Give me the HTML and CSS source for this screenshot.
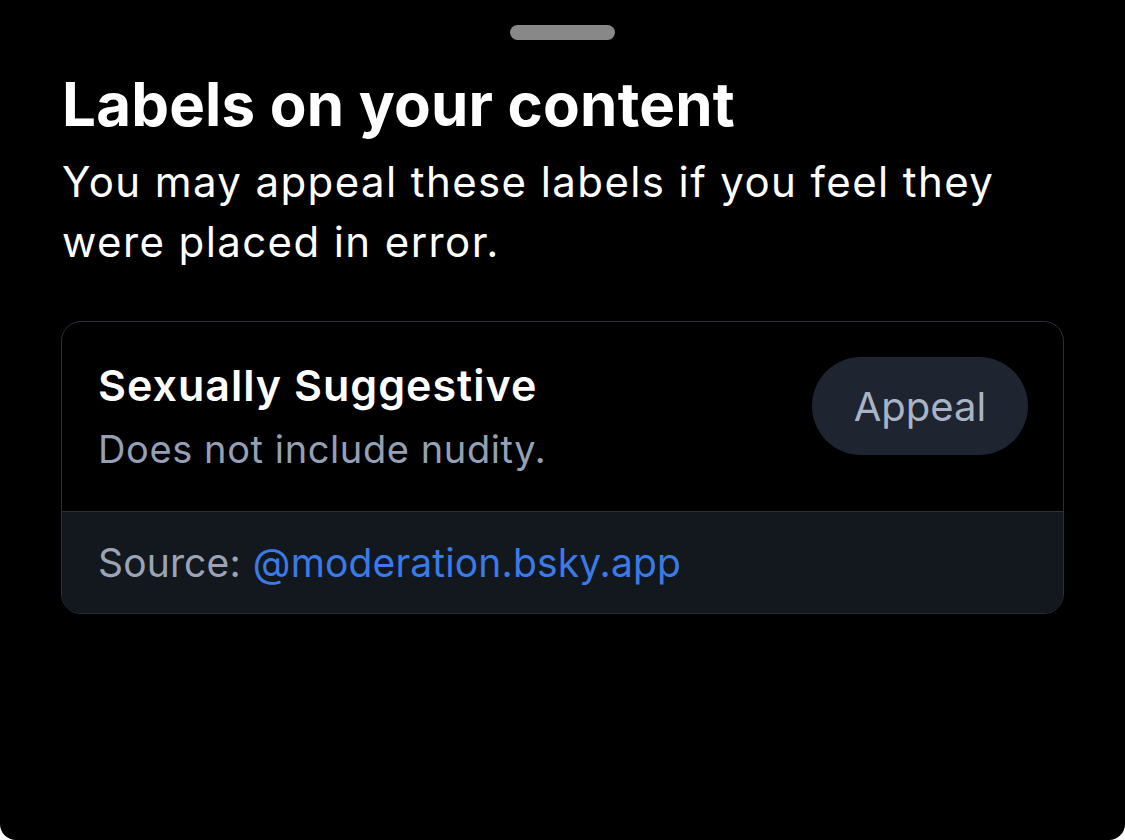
FILE: index.html
```html
<!DOCTYPE html>
<html lang="en">
<head>
<meta charset="utf-8">
<title>Labels on your content</title>
<link rel="stylesheet" href="styles.css">
</head>
<body>
<div class="sheet">
  <div class="handle"></div>
  <h1 class="title">Labels on your content</h1>
  <p class="subtitle">You may appeal these labels if you feel they were placed in error.</p>
  <div class="card">
    <div class="card-main">
      <div class="label-info">
        <div class="label-name">Sexually Suggestive</div>
        <div class="label-desc">Does not include nudity.</div>
      </div>
      <button class="appeal">Appeal</button>
    </div>
    <div class="card-footer">
      <span class="source-label">Source:</span> <span class="source-link">@moderation.bsky.app</span>
    </div>
  </div>
</div>
</body>
</html>
```
FILE: styles.css
```css
html, body {
  margin: 0;
  padding: 0;
  background: #ffffff;
}
body {
  font-family: Inter, "Noto Sans", sans-serif;
  -webkit-font-smoothing: antialiased;
}
.sheet {
  box-sizing: border-box;
  height: 840px;
  background: #000000;
  border-radius: 0 0 16px 16px;
  padding: 25px 61px 0 61px;
  display: flex;
  flex-direction: column;
}
.handle {
  align-self: center;
  width: 105px;
  height: 15px;
  border-radius: 8px;
  background: #888888;
}
.title {
  margin: 29px 0 0 1px;
  font-size: 60px;
  line-height: 70px;
  font-weight: 700;
  color: #ffffff;
  letter-spacing: 0.2px;
}
.subtitle {
  margin: 13px 0 0 1px;
  font-size: 42px;
  line-height: 60px;
  font-weight: 400;
  color: #ffffff;
  letter-spacing: 1.4px;
  max-width: 970px;
}
.card {
  margin-top: 49px;
  border: 1px solid #2a2f3b;
  border-radius: 20px;
  overflow: hidden;
}
.card-main {
  display: flex;
  justify-content: space-between;
  align-items: flex-start;
  padding: 35px 35px 34px 36px;
  border-bottom: 1px solid #2a2f3b;
}
.label-info {
  display: flex;
  flex-direction: column;
  gap: 8px;
}
.label-name {
  font-size: 43px;
  line-height: 56px;
  font-weight: 600;
  letter-spacing: 1px;
  color: #ffffff;
}
.label-desc {
  font-size: 38px;
  line-height: 56px;
  letter-spacing: 0.6px;
  color: #96a0b4;
}
.appeal {
  font-family: inherit;
  border: none;
  background: #1e2430;
  color: #a9b3c6;
  font-size: 40px;
  height: 98px;
  width: 216px;
  padding: 0;
  border-radius: 49px;
}
.card-footer {
  background: #13181f;
  height: 101px;
  padding: 0 36px;
  display: flex;
  align-items: center;
  font-size: 39px;
  letter-spacing: 0.15px;
}
.source-label {
  color: #9ba4b6;
  margin-right: 12px;
}
.source-link {
  color: #3a7be8;
}
```
